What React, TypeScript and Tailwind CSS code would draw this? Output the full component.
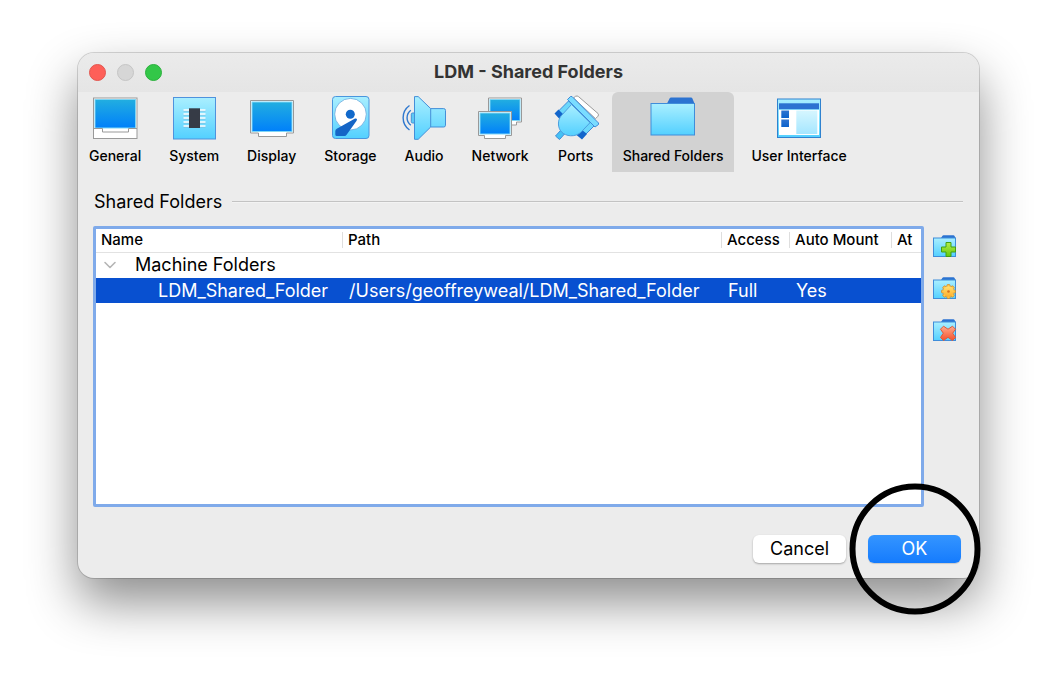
import type { ReactNode } from 'react';

function Gradients() {
  return (
    <svg width="0" height="0" className="absolute" aria-hidden="true">
      <defs>
        <linearGradient id="screen" x1="0" y1="0" x2="0" y2="1">
          <stop offset="0" stopColor="#22aee0" />
          <stop offset="1" stopColor="#0080fa" />
        </linearGradient>
        <linearGradient id="sky" x1="0" y1="0" x2="0" y2="1">
          <stop offset="0" stopColor="#aaefff" />
          <stop offset="1" stopColor="#53d0ff" />
        </linearGradient>
        <linearGradient id="navy" x1="0" y1="0" x2="0" y2="1">
          <stop offset="0" stopColor="#2f74d0" />
          <stop offset="1" stopColor="#0b62cc" />
        </linearGradient>
        <linearGradient id="pale" x1="0" y1="0" x2="0" y2="1">
          <stop offset="0" stopColor="#d6f6ff" />
          <stop offset="1" stopColor="#a5e6ff" />
        </linearGradient>
        <linearGradient id="green" x1="0" y1="0" x2="0" y2="1">
          <stop offset="0" stopColor="#b4ee4a" />
          <stop offset="1" stopColor="#62c90c" />
        </linearGradient>
        <linearGradient id="orange" x1="0" y1="0" x2="0" y2="1">
          <stop offset="0" stopColor="#ffe070" />
          <stop offset="1" stopColor="#ffae2b" />
        </linearGradient>
        <linearGradient id="red" x1="0" y1="0" x2="0" y2="1">
          <stop offset="0" stopColor="#ffab8c" />
          <stop offset="1" stopColor="#f4512c" />
        </linearGradient>
      </defs>
    </svg>
  );
}

function Icon({ children }: { children: ReactNode }) {
  return (
    <svg viewBox="0 0 48 48" className="-mx-2 size-12 shrink-0" aria-hidden="true">
      {children}
    </svg>
  );
}

const generalIcon = (
  <Icon>
    <rect x="2.5" y="4" width="43.5" height="40.5" fill="#fff" stroke="#999" />
    <rect x="4" y="5.5" width="40.5" height="28.5" fill="url(#screen)" stroke="#7fd6f5" />
    <path d="M3 34.5h8.5v3.5h26v-3.5H46" fill="none" stroke="#999" />
  </Icon>
);

const systemIcon = (
  <Icon>
    <rect x="3.5" y="3.5" width="42" height="41.5" fill="url(#sky)" stroke="#4f92dd" />
    <path d="M13.5 17h22M13.5 21h22M13.5 25h22M13.5 29h22M13.5 33h22" stroke="#7cbcdc" />
    <path d="M13.5 16h22M13.5 20h22M13.5 24h22M13.5 28h22M13.5 32h22" stroke="#fff" strokeWidth="1.4" />
    <rect x="19" y="14.3" width="11" height="19.7" fill="#363b46" />
  </Icon>
);

const displayIcon = (
  <Icon>
    <path d="M2.5 6.5h43v32.5h-7v3.5h-28v-3.5h-8z" fill="#fff" stroke="#999" />
    <rect x="4" y="8" width="40" height="29.5" fill="url(#screen)" stroke="#7fd6f5" />
  </Icon>
);

const storageIcon = (
  <Icon>
    <rect x="6.5" y="2.5" width="36.5" height="42" rx="3" fill="url(#sky)" stroke="#4a96de" />
    <circle cx="24.5" cy="20.2" r="15.8" fill="#fff" stroke="#69a9dd" strokeWidth=".8" />
    <circle cx="24.3" cy="20.2" r="4.5" fill="#1169cb" />
    <path d="M29 24.5q2.800-.5 1.600 2.200l-9.800 13.800q-1 1.500-2.500 1.500h-7.500q-1.500 0-1.500-1.500v-3.500q0-1.500 1.500-2.200z" fill="#1565c6" />
  </Icon>
);

const audioIcon = (
  <Icon>
    <path d="M9.500 11.500C1 17.500 1 30 9.500 36M10.800 16.200c-5 4-5 11 0 15" fill="none" stroke="#2f78ce" strokeWidth="1.4" />
    <rect x="11.300" y="19" width="4" height="10" rx="1.3" fill="#5ccaf5" stroke="#458fd8" />
    <path d="M14.500 2.600h3.700l12.500 12h13q1.800 0 1.800 1.800v14.800q0 1.800-1.800 1.800h-13l-12.500 12.300h-3.700z" fill="url(#sky)" stroke="#458fd8" />
    <path d="M30.700 14.600V33" stroke="#458fd8" />
  </Icon>
);

const networkIcon = (
  <Icon>
    <path d="M12.500 4h33v24h-5v3h-12v-3h-16z" fill="#fff" stroke="#999" />
    <rect x="14" y="5.500" width="30" height="21" fill="url(#screen)" stroke="#7fd6f5" />
    <path d="M2.500 17.500h33v24h-6v3h-21v-3h-6z" fill="#fff" stroke="#999" />
    <rect x="4" y="19" width="30" height="21" fill="url(#screen)" stroke="#7fd6f5" />
  </Icon>
);

const portsIcon = (
  <Icon>
    <path d="M21.500 4l2-1.700q1.800-.8 3 .3L46 19.500q1 1.300 0 2.700l-2.500 2.500z" fill="#fff" stroke="#999" />
    <path d="M6 17.500L16.500 7l5 5L10 23zM27.500 38.500l10-11 4.500 4.500-11 11z" fill="#6bd7fb" stroke="#3f8bd8" />
    <path d="M2.500 19.500l4-4 5 5-4 4.500zM24.500 41l5-5.500 5.500 4.500-5 5.500z" fill="#1265cb" />
    <path d="M3.500 42l5-5.500 4 3.500-5 5.500z" fill="#45c2f5" stroke="#3f8bd8" />
    <path d="M19.500 10.500L38 28.700l-9 9.500C23 43.500 14 42.500 9.500 38 5.500 33.500 5.500 26.500 9 22z" fill="url(#sky)" stroke="#4c9edf" />
    <path d="M15.500 5.500l3-3h1.500L46.500 29v1.500L43 33z" fill="#79dcff" stroke="#3f8bd8" strokeLinejoin="round" />
  </Icon>
);

const folderIcon = (
  <Icon>
    <path d="M18 9.500l2.700-5.200q.4-.8 1.300-.8h20q1 0 1.300.8l2.200 5.200z" fill="#2c73d1" />
    <rect x="2" y="9.500" width="43.500" height="31.500" fill="url(#sky)" stroke="#3f8dda" />
  </Icon>
);

const interfaceIcon = (
  <Icon>
    <rect x="2.500" y="5" width="43" height="38.500" fill="url(#sky)" stroke="#2f82cf" />
    <rect x="4" y="9.300" width="40" height="5.900" fill="#2c73d1" />
    <rect x="4" y="16" width="40" height="25" fill="#fff" />
    <rect x="6.300" y="16.500" width="7.700" height="7.500" fill="url(#navy)" />
    <rect x="6.300" y="25.500" width="7.700" height="7.500" fill="url(#navy)" />
    <rect x="21.300" y="16.500" width="21" height="23.500" fill="url(#pale)" />
  </Icon>
);

const tabs = [
  { label: 'General', icon: generalIcon },
  { label: 'System', icon: systemIcon },
  { label: 'Display', icon: displayIcon },
  { label: 'Storage', icon: storageIcon },
  { label: 'Audio', icon: audioIcon },
  { label: 'Network', icon: networkIcon },
  { label: 'Ports', icon: portsIcon },
  { label: 'Shared Folders', icon: folderIcon, active: true },
  { label: 'User Interface', icon: interfaceIcon },
];

function SmallFolder({ children }: { children: ReactNode }) {
  return (
    <svg viewBox="0 0 24 24" className="size-6" aria-hidden="true">
      <path d="M8 3l1.500-2.200q.3-.5 1-.5h10q.6 0 .9.500L22.600 3v3H8z" fill="#2c73d1" />
      <rect x=".5" y="3" width="22" height="18.500" fill="url(#sky)" stroke="#3f8dda" />
      {children}
    </svg>
  );
}

const gearTeeth = [0, 45, 90, 135, 180, 225, 270, 315];

const actions = [
  {
    label: 'Add shared folder',
    icon: (
      <SmallFolder>
        <path d="M13 7.500h5v4.500h4.500v5H18v4.500h-5V17H8.500v-5H13z" fill="url(#green)" stroke="#43a012" strokeLinejoin="round" />
      </SmallFolder>
    ),
  },
  {
    label: 'Edit shared folder',
    icon: (
      <SmallFolder>
        {gearTeeth.map((angle) => (
          <rect key={angle} x="13.900" y="7.600" width="3.200" height="3.500" rx=".8" fill="#ffc94a" stroke="#d58722" strokeWidth=".8" transform={`rotate(${angle} 15.500 14.500)`} />
        ))}
        <circle cx="15.500" cy="14.500" r="5.200" fill="url(#orange)" />
        <circle cx="15.500" cy="14.500" r="1.300" fill="#d9711c" />
      </SmallFolder>
    ),
  },
  {
    label: 'Remove shared folder',
    icon: (
      <SmallFolder>
        <path d="M10.500 7.200l4.500 3 4.500-3 3 3-2.800 4 2.800 4.300-3 3-4.500-3.200-4.500 3.200-3-3 2.800-4.300-2.800-4z" fill="url(#red)" stroke="#dc5a3a" strokeLinejoin="round" />
      </SmallFolder>
    ),
  },
];

export default function App() {
  return (
    <div className="flex min-h-screen bg-white px-[78px] pt-[53px] pb-[103px] font-['Inter',sans-serif] text-black">
      <Gradients />
      <main className="flex min-w-0 flex-1 flex-col rounded-2xl bg-[#ececec] shadow-[0_0_0_1px_rgba(0,0,0,0.15),0_24px_50px_rgba(0,0,0,0.45)]">
        <header className="grid h-[39px] shrink-0 grid-cols-[1fr_auto_1fr] items-center rounded-t-2xl bg-linear-to-b from-[#ebebeb] to-[#e5e5e5] px-[11px]">
          <div className="flex gap-[11px]">
            <button aria-label="Close" className="size-[17px] rounded-full border border-[#e2564f] bg-[#fe5f58]" />
            <button aria-label="Minimize" className="size-[17px] rounded-full border border-[#c5c5c5] bg-[#d6d6d6]" />
            <button aria-label="Zoom" className="size-[17px] rounded-full border border-[#2bb13d] bg-[#33c748]" />
          </div>
          <h1 className="pb-0.5 text-lg font-bold text-[#333]">LDM - Shared Folders</h1>
        </header>

        <nav className="flex gap-1.5">
          {tabs.map((tab) => (
            <button
              key={tab.label}
              aria-current={tab.active ? 'page' : undefined}
              className={`flex h-20 min-w-[60px] flex-col items-center rounded-t-md px-[11px] pt-0.5 whitespace-nowrap ${tab.active ? 'bg-[#d2d2d2]' : ''}`}
            >
              {tab.icon}
              <span className="mt-1 text-sm font-medium">{tab.label}</span>
            </button>
          ))}
        </nav>

        <div className="mt-4 flex items-center gap-2.5 px-4">
          <h2 className="text-lg">Shared Folders</h2>
          <div className="h-0.5 flex-1 border-t border-[#c3c3c3] bg-[#f3f3f3]" />
        </div>

        <div className="mt-2.5 flex flex-1 gap-[9px] pr-[22px] pl-[15px]">
          <div className="min-w-0 flex-1 rounded-xs border-3 border-[#7faaea] bg-white">
            <table className="w-full table-fixed border-collapse text-left whitespace-nowrap">
              <colgroup>
                <col className="w-[246px]" />
                <col />
                <col className="w-[68px]" />
                <col className="w-[102px]" />
                <col className="w-[30px]" />
              </colgroup>
              <thead>
                <tr className="h-[23px] border-b border-[#e2e2e2] text-[15px]">
                  {['Name', 'Path', 'Access', 'Auto Mount', 'At'].map((name, i) => (
                    <th key={name} className="p-0 font-medium">
                      <div className={`h-4 border-[#dedede] pl-[5px] leading-4 ${i > 0 ? 'border-l' : ''}`}>{name}</div>
                    </th>
                  ))}
                </tr>
              </thead>
              <tbody className="text-lg leading-6">
                <tr className="h-[26px]">
                  <td colSpan={5} className="p-0">
                    <div className="flex items-center gap-[18px] pl-[7px]">
                      <button aria-label="Collapse Machine Folders" aria-expanded="true">
                        <svg viewBox="0 0 14 10" className="h-2.5 w-3.5" aria-hidden="true">
                          <path d="M2 2.500l5 5 5-5" fill="none" stroke="#b5b5b5" strokeWidth="1.600" strokeLinecap="round" strokeLinejoin="round" />
                        </svg>
                      </button>
                      <span>Machine Folders</span>
                    </div>
                  </td>
                </tr>
                <tr className="h-[25px] bg-[#0850d0] text-white">
                  <td className="p-0 pl-[62px]">LDM_Shared_Folder</td>
                  <td className="p-0 pl-[7px]">/Users/geoffreyweal/LDM_Shared_Folder</td>
                  <td className="p-0 pl-[7px]">Full</td>
                  <td className="p-0 pl-[7px]">Yes</td>
                  <td className="p-0" />
                </tr>
              </tbody>
            </table>
          </div>
          <div className="flex w-6 flex-col gap-[18px] pt-[9px]">
            {actions.map((action) => (
              <button key={action.label} aria-label={action.label} className="size-6">
                {action.icon}
              </button>
            ))}
          </div>
        </div>

        <footer className="mt-7 mb-[15px] flex justify-end gap-[22px] pr-[18px]">
          <button className="h-7 w-[93px] rounded-md bg-white text-lg leading-7 shadow-[0_1px_2px_rgba(0,0,0,0.3)]">Cancel</button>
          <div className="relative">
            <button className="h-7 w-[93px] rounded-md bg-linear-to-b from-[#3495ff] to-[#147bfd] text-lg leading-7 text-white shadow-[0_1px_1px_rgba(0,0,0,0.15)]">OK</button>
            <div className="pointer-events-none absolute top-1/2 left-1/2 size-[131px] -translate-1/2 rounded-full border-6 border-black" />
          </div>
        </footer>
      </main>
    </div>
  );
}
